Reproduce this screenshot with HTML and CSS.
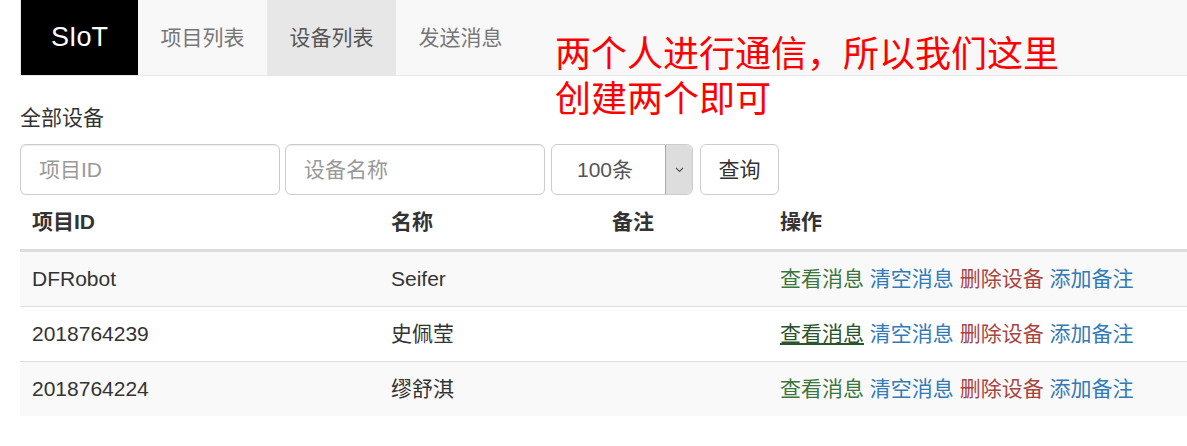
FILE: index.html
```html
<!DOCTYPE html>
<html lang="zh-CN">
<head>
<meta charset="utf-8">
<title>SIoT - 设备列表</title>
<link rel="stylesheet" href="styles.css">
</head>
<body>
<nav class="navbar">
  <a class="brand" href="#">SIoT</a>
  <ul class="nav">
    <li><a href="#">项目列表</a></li>
    <li class="active"><a href="#">设备列表</a></li>
    <li><a href="#">发送消息</a></li>
  </ul>
</nav>
<div class="note">两个人进行通信，所以我们这里<br>创建两个即可</div>
<main class="content">
  <h4 class="title">全部设备</h4>
  <form class="filters">
    <input class="field field-id" type="text" placeholder="项目ID">
    <input class="field field-name" type="text" placeholder="设备名称">
    <div class="select">
      <span class="select-value">100条</span>
      <span class="select-arrow"><svg width="9" height="6" viewBox="0 0 9 6"><path d="M1 1 L4.5 4.5 L8 1" fill="none" stroke="#555" stroke-width="1.1"/></svg></span>
    </div>
    <button class="btn" type="button">查询</button>
  </form>
  <table class="table">
    <thead>
      <tr>
        <th class="c1">项目ID</th>
        <th class="c2">名称</th>
        <th class="c3">备注</th>
        <th class="c4">操作</th>
      </tr>
    </thead>
    <tbody>
      <tr class="odd">
        <td>DFRobot</td>
        <td>Seifer</td>
        <td></td>
        <td><a class="ok" href="#">查看消息</a> <a class="info" href="#">清空消息</a> <a class="danger" href="#">删除设备</a> <a class="info" href="#">添加备注</a></td>
      </tr>
      <tr>
        <td>2018764239</td>
        <td>史佩莹</td>
        <td></td>
        <td><a class="ok hover" href="#">查看消息</a> <a class="info" href="#">清空消息</a> <a class="danger" href="#">删除设备</a> <a class="info" href="#">添加备注</a></td>
      </tr>
      <tr class="odd">
        <td>2018764224</td>
        <td>缪舒淇</td>
        <td></td>
        <td><a class="ok" href="#">查看消息</a> <a class="info" href="#">清空消息</a> <a class="danger" href="#">删除设备</a> <a class="info" href="#">添加备注</a></td>
      </tr>
    </tbody>
  </table>
</main>
</body>
</html>
```
FILE: styles.css
```css
* { box-sizing: border-box; }
html, body { margin: 0; padding: 0; background: #fff; }
body {
  font-family: "Liberation Sans", "Noto Sans CJK SC", sans-serif;
  font-size: 21px;
  line-height: 30px;
  color: #333;
  position: relative;
}

.navbar {
  display: flex;
  margin-left: 20px;
  height: 76px;
  background: #f8f8f8;
  border-bottom: 1px solid #e7e7e7;
  border-left: 1px solid #e7e7e7;
}
.brand {
  display: block;
  width: 117px;
  height: 75px;
  background: #000;
  color: #fff;
  text-decoration: none;
  font-size: 27px;
  line-height: 75px;
  text-align: center;
}
.nav { display: flex; margin: 0; padding: 0; list-style: none; }
.nav a {
  display: block;
  padding: 0 22.5px;
  line-height: 75px;
  height: 75px;
  color: #777;
  text-decoration: none;
}
.nav .active a { background: #e7e7e7; color: #555; }

.note {
  position: absolute;
  left: 555px;
  top: 29px;
  color: #ff0000;
  font-family: "Noto Sans CJK SC", sans-serif;
  font-size: 36px;
  line-height: 45px;
}

.content { padding-left: 20px; }
.title {
  margin: 27px 0 0;
  font-size: 21px;
  font-weight: normal;
  line-height: 30px;
  color: #333;
}
.filters {
  display: flex;
  gap: 6px;
  margin-top: 11px;
  height: 51px;
}
.field {
  width: 260px;
  height: 51px;
  padding: 0 18px;
  border: 1px solid #ccc;
  border-radius: 6px;
  font: inherit;
  color: #555;
  box-shadow: inset 0 1px 1px rgba(0,0,0,.075);
}
.field-name { margin-left: -1px; }
.field::placeholder { color: #999; }
.select {
  display: flex;
  width: 142px;
  height: 51px;
  border: 1px solid #ccc;
  border-radius: 6px;
  overflow: hidden;
}
.select-value {
  flex: 1;
  padding-left: 25px;
  line-height: 49px;
  color: #555;
}
.select-arrow {
  width: 27px;
  display: flex;
  align-items: center;
  justify-content: center;
  background: #dddddd;
  border-left: 1px solid #aaa;
  border-radius: 0 5px 5px 0;
}
.btn {
  width: 79px;
  height: 51px;
  margin-left: 1px;
  background: #fff;
  border: 1px solid #ccc;
  border-radius: 6px;
  font: inherit;
  color: #333;
  padding: 0;
}

.table {
  width: 1167px;
  border-collapse: separate;
  border-spacing: 0;
}
.table th, .table td {
  padding: 12px;
  line-height: 30px;
  text-align: left;
  vertical-align: top;
  white-space: nowrap;
}
.table th {
  font-weight: bold;
  border-bottom: 3px solid #ddd;
}
.table .c1 { width: 359px; }
.table .c2 { width: 221px; }
.table .c3 { width: 168px; }
.table tbody tr + tr td { border-top: 1px solid #ddd; }
.table tr.odd td { background: #f9f9f9; }
.table a { text-decoration: none; }
.table a.ok { color: #3c763d; }
.table a.ok.hover { color: #2b542c; text-decoration: underline; }
.table a.info { color: #337ab7; }
.table a.danger { color: #a94442; }
```
